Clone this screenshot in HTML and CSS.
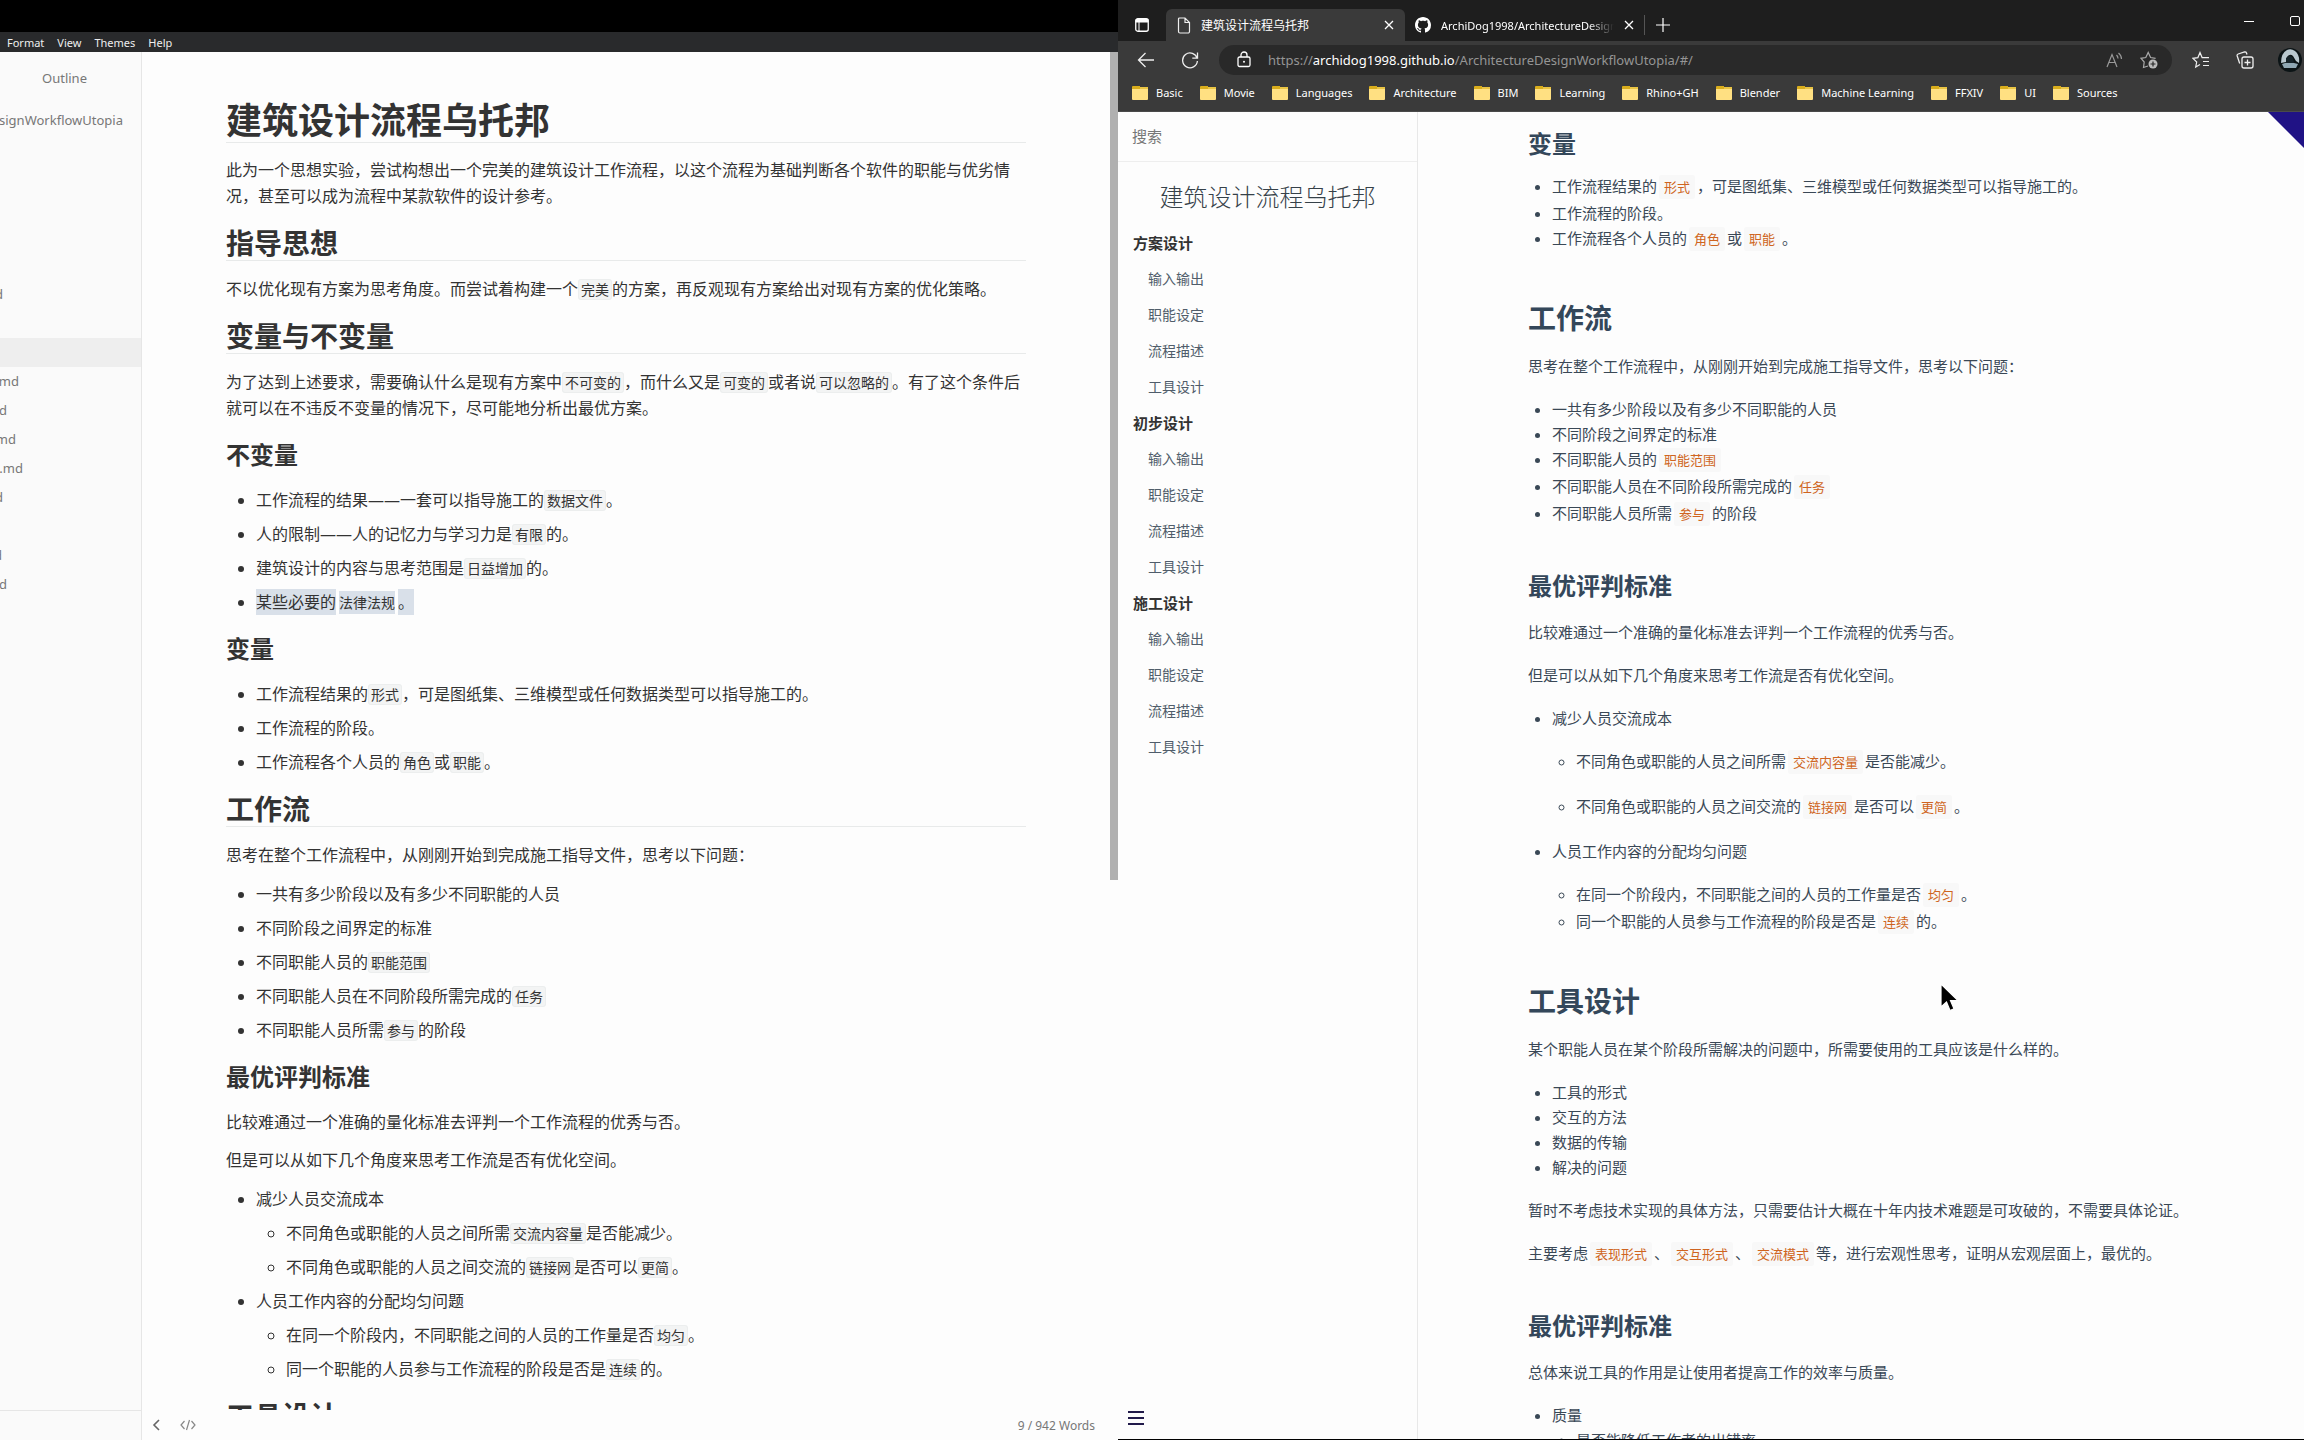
FILE: index.html
```html
<!DOCTYPE html>
<html lang="zh-CN">
<head>
<meta charset="utf-8">
<title>建筑设计流程乌托邦</title>
<link rel="stylesheet" href="styles.css">
</head>
<body>
<div class="desktop">
  <section class="editor">
    <nav class="menubar">
      <button>Format</button><button>View</button><button>Themes</button><button>Help</button>
    </nav>
    <div class="editor-body">
      <aside class="files">
        <button class="outline-tab">Outline</button>
        <div class="folder-name">signWorkflowUtopia</div>
        <ul class="file-list">
          <li class="end-3">d</li>
          <li></li>
          <li class="current"></li>
          <li class="end-19">md</li>
          <li class="end-7">d</li>
          <li class="end-16">md</li>
          <li class="end-23">.md</li>
          <li class="end-3">d</li>
          <li></li>
          <li class="end-2">d</li>
          <li class="end-7">d</li>
        </ul>
        <div class="files-footer"></div>
      </aside>
      <div class="write-pane">
        <div class="scroller">
          <article class="write">
            <h1>建筑设计流程乌托邦</h1>
            <p>此为一个思想实验，尝试构想出一个完美的建筑设计工作流程，以这个流程为基础判断各个软件的职能与优劣情况，甚至可以成为流程中某款软件的设计参考。</p>
            <h2>指导思想</h2>
            <p>不以优化现有方案为思考角度。而尝试着构建一个<code>完美</code>的方案，再反观现有方案给出对现有方案的优化策略。</p>
            <h2>变量与不变量</h2>
            <p>为了达到上述要求，需要确认什么是现有方案中<code>不可变的</code>，而什么又是<code>可变的</code>或者说<code>可以忽略的</code>。有了这个条件后就可以在不违反不变量的情况下，尽可能地分析出最优方案。</p>
            <h3>不变量</h3>
            <ul>
              <li>工作流程的结果——一套可以指导施工的<code>数据文件</code>。</li>
              <li>人的限制——人的记忆力与学习力是<code>有限</code>的。</li>
              <li>建筑设计的内容与思考范围是<code>日益增加</code>的。</li>
              <li><span class="sel">某些必要的</span><code class="sel-code"><span class="sel">法律法规</span></code><span class="sel">。</span></li>
            </ul>
            <h3>变量</h3>
            <ul>
              <li>工作流程结果的<code>形式</code>，可是图纸集、三维模型或任何数据类型可以指导施工的。</li>
              <li>工作流程的阶段。</li>
              <li>工作流程各个人员的<code>角色</code>或<code>职能</code>。</li>
            </ul>
            <h2>工作流</h2>
            <p>思考在整个工作流程中，从刚刚开始到完成施工指导文件，思考以下问题：</p>
            <ul>
              <li>一共有多少阶段以及有多少不同职能的人员</li>
              <li>不同阶段之间界定的标准</li>
              <li>不同职能人员的<code>职能范围</code></li>
              <li>不同职能人员在不同阶段所需完成的<code>任务</code></li>
              <li>不同职能人员所需<code>参与</code>的阶段</li>
            </ul>
            <h3>最优评判标准</h3>
            <p>比较难通过一个准确的量化标准去评判一个工作流程的优秀与否。</p>
            <p>但是可以从如下几个角度来思考工作流是否有优化空间。</p>
            <ul>
              <li>减少人员交流成本
                <ul>
                  <li>不同角色或职能的人员之间所需<code>交流内容量</code>是否能减少。</li>
                  <li>不同角色或职能的人员之间交流的<code>链接网</code>是否可以<code>更简</code>。</li>
                </ul>
              </li>
              <li>人员工作内容的分配均匀问题
                <ul>
                  <li>在同一个阶段内，不同职能之间的人员的工作量是否<code>均匀</code>。</li>
                  <li>同一个职能的人员参与工作流程的阶段是否是<code>连续</code>的。</li>
                </ul>
              </li>
            </ul>
            <h2>工具设计</h2>
          </article>
          <div class="scrollbar"><div class="thumb"></div></div>
        </div>
        <footer class="status">
          <button aria-label="Toggle sidebar"><svg width="10" height="12" viewBox="0 0 10 12"><path d="M7 1 2 6l5 5" fill="none" stroke="#666" stroke-width="1.6"/></svg></button>
          <button aria-label="Source mode"><svg width="16" height="12" viewBox="0 0 16 12"><path d="M4.500 2 1 6l3.500 4M11.500 2 15 6l-3.500 4M9.500 1l-3 10" fill="none" stroke="#888" stroke-width="1.200"/></svg></button>
          <span class="words">9 / 942 Words</span>
        </footer>
      </div>
    </div>
  </section>

  <section class="browser">
    <header class="tabstrip">
      <button class="workspaces" aria-label="Tab actions"><svg width="14" height="14" viewBox="0 0 14 14"><rect x=".75" y=".75" width="12.500" height="12.500" rx="2" fill="none" stroke="#fff" stroke-width="1.300"/><path d="M1 1.500h12v2.500H1zM4 4v9" fill="#fff" stroke="#fff"/></svg></button>
      <div class="tab active">
        <svg width="14" height="17" viewBox="0 0 14 17"><path d="M2.500 1H8l4.500 4.500v9a1.500 1.500 0 0 1-1.500 1.500H3a1.500 1.500 0 0 1-1.500-1.500V2A1 1 0 0 1 2.500 1zM8 1v4.500h4.500" fill="none" stroke="#eee" stroke-width="1.200"/></svg>
        <span class="tab-title">建筑设计流程乌托邦</span>
        <button aria-label="Close tab"><svg width="10" height="10" viewBox="0 0 10 10"><path d="M1 1l8 8M9 1 1 9" stroke="#fff" stroke-width="1.300"/></svg></button>
      </div>
      <div class="tab">
        <svg width="16" height="16" viewBox="0 0 16 16"><path fill="#fff" d="M8 0C3.580 0 0 3.580 0 8c0 3.540 2.290 6.530 5.470 7.590.4.070.55-.17.55-.38 0-.19-.01-.82-.01-1.490-2.010.37-2.530-.49-2.690-.94-.09-.23-.48-.94-.82-1.130-.28-.15-.68-.52-.01-.53.63-.01 1.080.58 1.230.82.72 1.210 1.870.87 2.330.66.070-.52.28-.87.51-1.070-1.780-.2-3.640-.89-3.640-3.950 0-.87.31-1.590.82-2.150-.08-.2-.36-1.020.08-2.120 0 0 .67-.21 2.200.82.64-.18 1.320-.27 2-.27s1.360.09 2 .27c1.530-1.040 2.200-.82 2.200-.82.44 1.100.16 1.920.08 2.120.51.56.82 1.270.82 2.150 0 3.070-1.870 3.750-3.650 3.950.29.25.54.73.54 1.480 0 1.070-.01 1.930-.01 2.200 0 .21.15.46.55.38A8.010 8.010 0 0 0 16 8c0-4.420-3.580-8-8-8z"/></svg>
        <span class="tab-title faded">ArchiDog1998/ArchitectureDesign</span>
        <button aria-label="Close tab"><svg width="10" height="10" viewBox="0 0 10 10"><path d="M1 1l8 8M9 1 1 9" stroke="#fff" stroke-width="1.300"/></svg></button>
      </div>
      <button class="new-tab" aria-label="New tab"><svg width="14" height="14" viewBox="0 0 14 14"><path d="M7 0v14M0 7h14" stroke="#fff" stroke-width="1.200"/></svg></button>
      <div class="window-controls">
        <button aria-label="Minimize"><svg width="10" height="10" viewBox="0 0 10 10"><path d="M0 5.500h10" stroke="#fff"/></svg></button>
        <button aria-label="Maximize"><svg width="10" height="10" viewBox="0 0 10 10"><rect x=".5" y=".5" width="9" height="9" rx="1.500" fill="none" stroke="#fff"/></svg></button>
      </div>
    </header>
    <div class="toolbar">
      <button aria-label="Back"><svg width="18" height="16" viewBox="0 0 18 16"><path d="M8.500 1 1.500 8l7 7M1.500 8H17" fill="none" stroke="#eee" stroke-width="1.300"/></svg></button>
      <button aria-label="Refresh"><svg width="18" height="18" viewBox="0 0 18 18"><path d="M16.200 7.500A7.400 7.400 0 1 0 16.400 10M16.500 1.500v5.700h-5.200" fill="none" stroke="#eee" stroke-width="1.300"/></svg></button>
      <div class="address">
        <svg width="14" height="17" viewBox="0 0 14 17"><rect x="1" y="6" width="12" height="9.500" rx="1.500" fill="none" stroke="#fff" stroke-width="1.300"/><path d="M4 6V4a3 3 0 0 1 6 0v2" fill="none" stroke="#fff" stroke-width="1.300"/><circle cx="7" cy="10.700" r="1" fill="#fff"/></svg>
        <span class="url" role="textbox" aria-label="Address">https://<b>archidog1998.github.io</b>/ArchitectureDesignWorkflowUtopia/#/</span>
        <button aria-label="Read aloud"><svg width="17" height="16" viewBox="0 0 17 16"><path d="M1 15 6 2.500 11 15M2.800 10.500h6.400M10.500 3q1.500 1.500 1.500 3.500M12.500 1q3 2.500 3 6" fill="none" stroke="#999" stroke-width="1.200"/></svg></button>
        <button aria-label="Add to favorites"><svg width="18" height="18" viewBox="0 0 18 18"><path d="M8 15 3.500 16.500 4.200 11 1 7.300 5.800 6.500 8.200 1.500l2.400 5 5 .8" fill="none" stroke="#aaa" stroke-width="1.200"/><circle cx="13" cy="13" r="4.500" fill="#bbb"/><path d="M13 10.500v5M10.500 13h5" stroke="#292929" stroke-width="1.200"/></svg></button>
      </div>
      <button aria-label="Favorites"><svg width="18" height="18" viewBox="0 0 18 18"><path d="M8 13.500 3.700 16 4.700 11 1 7.300 5.900 6.600 8 1.500l2.100 5.100H17M11 10.500h6M11 14.500h6" fill="none" stroke="#eee" stroke-width="1.200"/></svg></button>
      <button aria-label="Collections"><svg width="18" height="18" viewBox="0 0 18 18"><rect x="6" y="6" width="11" height="11" rx="2" fill="none" stroke="#eee" stroke-width="1.300"/><path d="M11.500 8.500v6M8.500 11.500h6M3.700 12.500 1.200 5Q.8 3.500 2.200 3L8.500 1q1.500-.3 2 1l.5 1.500" fill="none" stroke="#eee" stroke-width="1.300"/></svg></button>
      <button class="avatar" aria-label="Profile"><svg width="24" height="24" viewBox="0 0 24 24"><circle cx="12" cy="12" r="12" fill="#0c1416"/><path d="M3 15Q3 5 9 2q4-2 8 1 5 4 4 12l-3-2-3-5q-3-3-6 1l-1 5z" fill="#b9c8cf"/><path d="M4 16q8-3 16 0l-2 4H6z" fill="#8fa7b3"/><path d="M8 10q4-4 7 0l1 5H8z" fill="#16242a"/></svg></button>
    </div>
    <nav class="bookmarks">
      <a href="#">Basic</a><a href="#">Movie</a><a href="#">Languages</a><a href="#">Architecture</a><a href="#">BIM</a><a href="#">Learning</a><a href="#">Rhino+GH</a><a href="#">Blender</a><a href="#">Machine Learning</a><a href="#">FFXIV</a><a href="#">UI</a><a href="#">Sources</a>
    </nav>
    <div class="page">
      <aside class="doc-nav">
        <div class="search"><input type="search" placeholder="搜索" aria-label="搜索"></div>
        <a class="doc-title" href="#">建筑设计流程乌托邦</a>
        <ul>
          <li><strong>方案设计</strong>
            <ul><li><a href="#">输入输出</a></li><li><a href="#">职能设定</a></li><li><a href="#">流程描述</a></li><li><a href="#">工具设计</a></li></ul></li>
          <li><strong>初步设计</strong>
            <ul><li><a href="#">输入输出</a></li><li><a href="#">职能设定</a></li><li><a href="#">流程描述</a></li><li><a href="#">工具设计</a></li></ul></li>
          <li><strong>施工设计</strong>
            <ul><li><a href="#">输入输出</a></li><li><a href="#">职能设定</a></li><li><a href="#">流程描述</a></li><li><a href="#">工具设计</a></li></ul></li>
        </ul>
        <button class="nav-toggle" aria-label="Menu"><i></i><i></i><i></i></button>
      </aside>
      <main class="doc">
        <h3>变量</h3>
        <ul>
          <li>工作流程结果的<code>形式</code>，可是图纸集、三维模型或任何数据类型可以指导施工的。</li>
          <li>工作流程的阶段。</li>
          <li>工作流程各个人员的<code>角色</code>或<code>职能</code>。</li>
        </ul>
        <h2>工作流</h2>
        <p>思考在整个工作流程中，从刚刚开始到完成施工指导文件，思考以下问题：</p>
        <ul>
          <li>一共有多少阶段以及有多少不同职能的人员</li>
          <li>不同阶段之间界定的标准</li>
          <li>不同职能人员的<code>职能范围</code></li>
          <li>不同职能人员在不同阶段所需完成的<code>任务</code></li>
          <li>不同职能人员所需<code>参与</code>的阶段</li>
        </ul>
        <h3>最优评判标准</h3>
        <p>比较难通过一个准确的量化标准去评判一个工作流程的优秀与否。</p>
        <p>但是可以从如下几个角度来思考工作流是否有优化空间。</p>
        <ul>
          <li><p>减少人员交流成本</p>
            <ul>
              <li><p>不同角色或职能的人员之间所需<code>交流内容量</code>是否能减少。</p></li>
              <li><p>不同角色或职能的人员之间交流的<code>链接网</code>是否可以<code>更简</code>。</p></li>
            </ul>
          </li>
          <li><p>人员工作内容的分配均匀问题</p>
            <ul>
              <li>在同一个阶段内，不同职能之间的人员的工作量是否<code>均匀</code>。</li>
              <li>同一个职能的人员参与工作流程的阶段是否是<code>连续</code>的。</li>
            </ul>
          </li>
        </ul>
        <h2>工具设计</h2>
        <p>某个职能人员在某个阶段所需解决的问题中，所需要使用的工具应该是什么样的。</p>
        <ul>
          <li>工具的形式</li>
          <li>交互的方法</li>
          <li>数据的传输</li>
          <li>解决的问题</li>
        </ul>
        <p>暂时不考虑技术实现的具体方法，只需要估计大概在十年内技术难题是可攻破的，不需要具体论证。</p>
        <p>主要考虑<code>表现形式</code>、<code>交互形式</code>、<code>交流模式</code>等，进行宏观性思考，证明从宏观层面上，最优的。</p>
        <h3>最优评判标准</h3>
        <p>总体来说工具的作用是让使用者提高工作的效率与质量。</p>
        <ul>
          <li>质量
            <ul class="tight"><li>是否能降低工作者的出错率</li></ul>
          </li>
        </ul>
      </main>
      <a class="corner" href="#" aria-label="View source on Github"></a>
    </div>
  </section>
  <svg class="cursor" width="20" height="30" viewBox="0 0 20 30"><path d="M1 1v23l5.500-5 3.500 8.500 4-1.700-3.500-8.300H18z" fill="#000" stroke="#fff" stroke-width="1.200"/></svg>
</div>
</body>
</html>
```
FILE: styles.css
```css
* { box-sizing: border-box; }
body {
  margin: 0;
  font-family: "Noto Sans", "Noto Sans CJK SC", sans-serif;
}
button {
  border: 0;
  padding: 0;
  background: none;
  font: inherit;
  color: inherit;
  display: flex;
  align-items: center;
  justify-content: center;
}
a { color: inherit; text-decoration: none; }
svg { flex: none; display: block; }

.desktop {
  position: relative;
  display: grid;
  grid-template-columns: 1118fr 1186fr;
  height: 100vh;
  overflow: hidden;
  background: #fdfdfd;
}

/* Markdown editor */
.editor {
  display: flex;
  flex-direction: column;
  min-width: 0;
  min-height: 0;
  border-top: 32px solid #000;
}
.menubar {
  display: flex;
  gap: 13px;
  height: 20px;
  padding-left: 7px;
  background: #292a2c;
  color: #eee;
  font-size: 11px;
  flex: none;
}
.editor-body { display: flex; flex: 1; min-height: 0; }
.files {
  display: flex;
  flex-direction: column;
  width: 142px;
  flex: none;
  overflow: hidden;
  background: #fafafa;
  border-right: 1px solid #e6e6e6;
  color: #777;
  font-size: 13px;
}
.outline-tab { height: 24px; margin: 14px 12px 0 0; }
.folder-name {
  display: flex;
  justify-content: flex-end;
  padding-right: 18px;
  margin-top: 18px;
  line-height: 24px;
}
.file-list { list-style: none; margin: 148px 0 0; padding: 0; }
.file-list li {
  display: flex;
  justify-content: flex-end;
  height: 29px;
  line-height: 29px;
}
.file-list .current { background: #eee; }
.file-list .end-2 { width: 2px; }
.file-list .end-3 { width: 3px; }
.file-list .end-7 { width: 7px; }
.file-list .end-16 { width: 16px; }
.file-list .end-19 { width: 19px; }
.file-list .end-23 { width: 23px; }
.files-footer { height: 30px; margin-top: auto; border-top: 1px solid #e6e6e6; }

.write-pane { flex: 1; display: flex; flex-direction: column; min-width: 0; }
.scroller { flex: 1; display: flex; min-height: 0; overflow: hidden; }
.write {
  flex: 1;
  max-width: 800px;
  margin: 0 auto;
  padding-top: 47px;
  color: #333;
  font-size: 16px;
  line-height: 26px;
}
.scrollbar { width: 8px; flex: none; }
.thumb { height: 61%; background: #b0b0b0; }
.write h1, .write h2, .write h3 { margin: 17px 0 15px; font-weight: 700; }
.write h1 { margin: 0 0 14px; font-size: 36px; line-height: 43px; border-bottom: 1px solid #e8eaea; }
.write h2 { font-size: 28px; line-height: 34px; border-bottom: 1px solid #e8eaea; }
.write h3 { font-size: 24px; line-height: 34px; }
.write p { margin: 12px 0; }
.write ul { margin: 13px 0; padding-left: 30px; }
.write li + li, .write li > ul { margin-top: 8px; margin-bottom: 0; }
.write code {
  padding: 0 2px;
  border: 1px solid #eceeee;
  border-radius: 3px;
  background: #f3f4f4;
  font-family: inherit;
  font-size: 14px;
  line-height: 20px;
}
.write .sel { background: #d9e0e9; padding: 2px 0; }
.write .sel-code { background: #fff; border-color: #fff; }
.status {
  display: flex;
  align-items: center;
  gap: 18px;
  height: 30px;
  padding: 0 23px 0 10px;
  color: #777;
  font-size: 12px;
  flex: none;
}
.words { margin-left: auto; }

/* Browser */
.browser {
  display: flex;
  flex-direction: column;
  min-width: 0;
  min-height: 0;
  color: #fff;
  font-size: 11px;
  border-bottom: 1px solid #000;
}
.tabstrip {
  display: flex;
  align-items: flex-end;
  height: 41px;
  background: #1e1e1e;
  flex: none;
}
.workspaces { width: 48px; height: 32px; }
.tab {
  display: flex;
  align-items: center;
  width: 239px;
  height: 32px;
  padding: 0 10px;
  gap: 10px;
  border-radius: 6px 6px 0 0;
}
.tab.active { background: #3a3a3a; padding: 0 11px; font-size: 12px; }
.tab-title { flex: 1; min-width: 0; overflow: hidden; white-space: nowrap; }
.faded { mask-image: linear-gradient(90deg, #000 85%, transparent); }
.new-tab { width: 36px; height: 20px; margin-bottom: 6px; border-left: 1px solid #555; }
.window-controls { display: flex; gap: 36px; margin: 0 4px 15px auto; }
.toolbar {
  display: flex;
  align-items: center;
  gap: 26px;
  height: 37px;
  padding: 0 2px 0 19px;
  background: #3a3a3a;
  flex: none;
}
.address {
  display: flex;
  align-items: center;
  flex: 1;
  gap: 17px;
  height: 30px;
  margin: 0 -6px;
  padding: 0 14px 0 18px;
  border-radius: 15px;
  background: #292929;
}
.url { flex: 1; color: #959595; font-size: 13px; }
.url b { font-weight: 400; color: #fff; }
.avatar { margin-left: -2px; }
.bookmarks {
  display: flex;
  align-items: center;
  gap: 17px;
  height: 34px;
  padding: 0 14px 4px;
  background: #3a3a3a;
  border-bottom: 1px solid #4a4a4a;
  flex: none;
}
.bookmarks a { display: flex; align-items: center; gap: 8px; white-space: nowrap; }
.bookmarks a::before {
  content: "";
  width: 16px;
  height: 14px;
  border-radius: 1px;
  background:
    linear-gradient(#d9ad1c, #d9ad1c) 0 0 / 8px 3px no-repeat,
    linear-gradient(#ffe082, #ffe082) 0 3px / 16px 11px no-repeat,
    linear-gradient(#e9c443, #e9c443) 8px 1px / 8px 2px no-repeat;
}

/* Documentation site */
.page {
  position: relative;
  display: flex;
  flex: 1;
  min-height: 0;
  overflow: hidden;
  background: #fdfdfd;
}
.doc-nav {
  display: flex;
  flex-direction: column;
  width: 300px;
  flex: none;
  border-right: 1px solid #e8e8e8;
  color: #364149;
}
.search { height: 50px; padding: 0 14px; border-bottom: 1px solid #eee; }
.search input {
  width: 100%;
  height: 48px;
  padding: 0;
  border: 0;
  outline: 0;
  background: none;
  font: inherit;
  font-size: 15px;
}
.search input::placeholder { color: #777; }
.doc-title {
  margin: 17px 0 10px;
  line-height: 36px;
  font-size: 24px;
  font-weight: 300;
  text-align: center;
}
.doc-nav ul { list-style: none; margin: 0; padding: 0 0 0 15px; font-size: 15px; line-height: 36px; }
.doc-nav strong { color: #333; font-weight: 700; }
.doc-nav ul ul { font-size: 14px; color: #505d6b; }
.nav-toggle {
  flex-direction: column;
  gap: 4px;
  width: 36px;
  height: 42px;
  margin-top: auto;
}
.nav-toggle i { width: 16px; height: 2px; background: #211a4a; }
.doc {
  flex: 1;
  padding: 16px 110px 0;
  color: #3a4856;
  font-size: 15px;
  line-height: 25px;
}
.doc h2, .doc h3 { color: #34475a; font-weight: 700; }
.doc h2 { margin: 47px 0 18px; font-size: 28px; line-height: 36px; }
.doc h3 { margin: 42px 0 14px; font-size: 24px; line-height: 32px; }
.doc h3:first-child { margin-top: 0; }
.doc p { margin: 18px 0; }
.doc ul { margin: 14px 0; padding-left: 24px; }
.doc .tight { margin: 0; }
.doc code {
  margin: 0 2px;
  padding: 3px 5px;
  border-radius: 2px;
  background: #f8f8f8;
  color: #cf6420;
  font-family: inherit;
  font-size: 13px;
  line-height: 27px;
}
.corner {
  position: absolute;
  top: 0;
  right: 0;
  width: 36px;
  height: 36px;
  background: #201285;
  clip-path: polygon(0 0, 100% 0, 100% 100%);
}
.cursor { position: absolute; left: 1940px; top: 983px; }
```
